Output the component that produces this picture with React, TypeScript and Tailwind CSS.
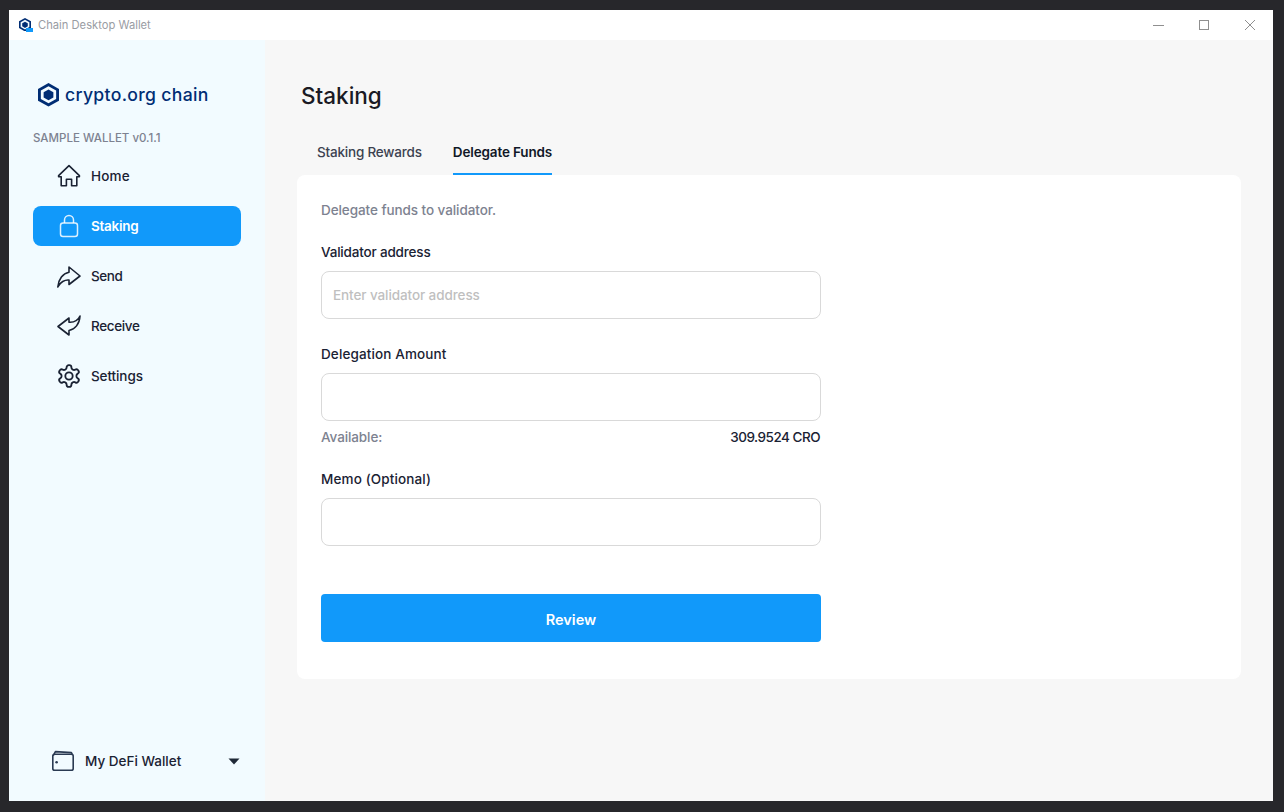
const font = 'font-["Inter",sans-serif]';

function HomeIcon() {
  return (
    <svg width="24" height="24" viewBox="0 0 24 24" fill="none" stroke="#1a2233" strokeWidth="1.6" strokeLinejoin="round" strokeLinecap="round">
      <path d="M12 1.6 1.6 11.6v1.2h2.6v9h5.2v-6.6h5.2v6.6h5.2v-9h2.6v-1.2z" />
    </svg>
  );
}

function LockIcon() {
  return (
    <svg width="24" height="24" viewBox="0 0 24 24" fill="none" stroke="#ffffff" strokeOpacity="0.85" strokeWidth="1.5">
      <rect x="3.5" y="9" width="17" height="13.5" rx="2.5" />
      <path d="M7.5 9V6a4.5 4.5 0 0 1 9 0v3" />
    </svg>
  );
}

function SendIcon() {
  return (
    <svg width="24" height="24" viewBox="0 0 24 24" fill="none" stroke="#1a2233" strokeWidth="1.6" strokeLinejoin="round" strokeLinecap="round">
      <path d="M12 3 23 12 12 20.5V16C8 15.5 3 18 .8 23 1.5 15 6 9.5 12 8.2z" />
    </svg>
  );
}

function ReceiveIcon() {
  return (
    <svg width="24" height="24" viewBox="0 0 24 24" fill="none" stroke="#1a2233" strokeWidth="1.6" strokeLinejoin="round" strokeLinecap="round">
      <path d="M12 21 1 12.5 12 4V8.2C16.5 8.5 21 6.5 23 2 22.5 10 18 15.5 12 16.5z" />
    </svg>
  );
}

function GearIcon() {
  return (
    <svg className="-ml-[1px] -mt-[1px]" width="26" height="26" viewBox="0 0 24 24" fill="none" stroke="#1a2233" strokeWidth="1.7" strokeLinejoin="round" strokeLinecap="round">
      <path d="M12.22 2h-.44a2 2 0 0 0-2 2v.18a2 2 0 0 1-1 1.73l-.43.25a2 2 0 0 1-2 0l-.15-.08a2 2 0 0 0-2.73.73l-.22.38a2 2 0 0 0 .73 2.73l.15.1a2 2 0 0 1 1 1.72v.51a2 2 0 0 1-1 1.74l-.15.09a2 2 0 0 0-.73 2.73l.22.38a2 2 0 0 0 2.73.73l.15-.08a2 2 0 0 1 2 0l.43.25a2 2 0 0 1 1 1.73V20a2 2 0 0 0 2 2h.44a2 2 0 0 0 2-2v-.18a2 2 0 0 1 1-1.73l.43-.25a2 2 0 0 1 2 0l.15.08a2 2 0 0 0 2.73-.73l.22-.39a2 2 0 0 0-.73-2.73l-.15-.08a2 2 0 0 1-1-1.74v-.5a2 2 0 0 1 1-1.74l.15-.09a2 2 0 0 0 .73-2.73l-.22-.38a2 2 0 0 0-2.73-.73l-.15.08a2 2 0 0 1-2 0l-.43-.25a2 2 0 0 1-1-1.73V4a2 2 0 0 0-2-2z" />
      <circle cx="12" cy="12" r="3.4" />
    </svg>
  );
}

function WalletIcon() {
  return (
    <svg width="22" height="22" viewBox="0 0 22 22" fill="none" stroke="#2a3a52" strokeWidth="1.6" strokeLinejoin="round">
      <rect x="0.8" y="4.2" width="20.4" height="16" rx="1.8" />
      <path d="M1.2 5.6 3.4 1.6 19.4 2.6 20.6 5" />
      <circle cx="4.6" cy="12.2" r="1.3" fill="#2a3a52" stroke="none" />
    </svg>
  );
}

function Logo({ size }: { size: number }) {
  return (
    <svg width={size} height={size * 1.12} viewBox="0 0 25 28">
      <path d="M12.5 0 25 7v14l-12.5 7L0 21V7z" fill="#002d74" />
      <path d="M12.5 3.8 21.6 9v10l-9.1 5.2L3.4 19V9z" fill="#f2fbff" />
      <path d="M12.5 7.6 18.3 11v6.4l-5.8 3.2-5.8-3.2V11z" fill="#002d74" />
    </svg>
  );
}

function NavItem({ icon, label, active, fit }: { icon: React.ReactNode; label: string; active?: boolean; fit?: string }) {
  return (
    <div className={`flex h-10 items-center rounded-lg pl-6 mb-2.5 ${active ? 'bg-[#1199fa] text-white font-semibold' : 'text-[#1a2233] font-medium'}`}>
      <span className="w-[34px] shrink-0">{icon}</span>
      <span className={`text-[13.5px] ${fit ?? ''}`}>{label}</span>
    </div>
  );
}

function Field({ label, placeholder, fit }: { label: string; placeholder?: string; fit?: string }) {
  return (
    <div>
      <div className={`h-5 text-[13.5px] leading-5 font-medium text-[#1a2233] ${fit ?? ''}`}>{label}</div>
      <div className="mt-[9px] flex h-12 items-center rounded-lg border border-[#d9d9d9] bg-white px-[11px] text-[13.5px] font-medium tracking-[-0.09px] text-[#bfbfbf]">{placeholder}</div>
    </div>
  );
}

export default function App() {
  return (
    <div className={`h-[812px] w-[1284px] overflow-hidden bg-[#27272b] pb-[11px] pl-[9px] pr-[11px] pt-[10px] ${font}`}>
      <div className="flex h-full flex-col">
        <div className="flex h-[30px] shrink-0 items-center bg-white pl-[10px]">
          <div className="relative mr-[5px] h-[14px] w-[14px]">
            <Logo size={12} />
            <span className="absolute bottom-0 right-0 h-[4px] w-[7px] bg-[#1199fa]" />
          </div>
          <span className="text-[11.2px] text-[#999ca3]">Chain Desktop Wallet</span>
          <div className="ml-auto flex items-center gap-[35px] pr-[17px]">
            <span className="block h-px w-[11px] bg-[#8f8f8f]" />
            <span className="block h-[10px] w-[10px] border border-[#8f8f8f]" />
            <svg width="12" height="12" viewBox="0 0 12 12" stroke="#8f8f8f" strokeWidth="1">
              <path d="M1 1l10 10M11 1 1 11" />
            </svg>
          </div>
        </div>

        <div className="flex min-h-0 flex-1">
          <aside className="flex w-[256px] shrink-0 flex-col bg-[#f2fbff] pb-[20px] pl-[24px] pr-[24px]">
            <div className="mt-[43px] flex items-center pl-[5px]">
              <Logo size={21} />
              <span className="ml-[6px] text-[17.6px] font-medium leading-6 tracking-[0.33px] text-[#002d74]">crypto.org chain</span>
            </div>
            <div className="mt-[21px] text-[11.5px] font-medium leading-5 text-[#7d8290]">SAMPLE WALLET v0.1.1</div>
            <nav className="mt-[8px]">
              <NavItem icon={<HomeIcon />} label="Home" fit="tracking-[0.2px]" />
              <NavItem icon={<LockIcon />} label="Staking" active fit="tracking-[-0.25px]" />
              <NavItem icon={<SendIcon />} label="Send" fit="tracking-[-0.4px]" />
              <NavItem icon={<ReceiveIcon />} label="Receive" fit="tracking-[-0.35px]" />
              <NavItem icon={<GearIcon />} label="Settings" fit="tracking-[-0.1px]" />
            </nav>
            <div className="mt-auto flex h-10 items-center pl-[19px] text-[13.5px] font-medium text-[#1a2233]">
              <WalletIcon />
              <span className="ml-[11px]">My DeFi Wallet</span>
              <svg className="ml-auto mr-[1px]" width="12" height="7" viewBox="0 0 12 7" fill="#1f2937">
                <path d="M0.5 0.5h11L6 6.5z" />
              </svg>
            </div>
          </aside>

          <main className="min-w-0 flex-1 bg-[#f7f7f7] pl-[32px] pr-[32px]">
            <h1 className="mt-[40px] pl-[4px] text-[22.5px] font-medium leading-[32px] text-[#1a1a24]">Staking</h1>
            <div className="mt-[24px] flex h-[39px] gap-[31px] pl-[20px] text-[13.5px] font-medium">
              <div className="pt-[6px] leading-5 tracking-[-0.2px] text-[#3c4250]">Staking Rewards</div>
              <div className="border-b-2 border-[#1199fa] pt-[6px] leading-5 font-semibold tracking-[-0.14px] text-[#111827]">Delegate Funds</div>
            </div>
            <section className="rounded-lg bg-white px-6 pb-[37px] pt-[25px]">
              <p className="text-[13.5px] font-medium leading-5 tracking-[-0.07px] text-[#7d8290]">Delegate funds to validator.</p>
              <div className="mt-[22px] w-[500px]">
                <Field label="Validator address" placeholder="Enter validator address" fit="tracking-[-0.18px]" />
                <div className="mt-[25px]">
                  <Field label="Delegation Amount" fit="tracking-[0.12px]" />
                </div>
                <div className="mt-[6px] flex h-5 items-center justify-between pr-[1px] text-[13.5px] leading-5">
                  <span className="font-medium tracking-[-0.1px] text-[#7d8290]">Available:</span>
                  <span className="font-medium tracking-[-0.5px] text-[#1a2233]">309.9524 CRO</span>
                </div>
                <div className="mt-[22px]">
                  <Field label="Memo (Optional)" fit="tracking-[0.13px]" />
                </div>
                <button className="mt-[48px] flex h-12 w-full items-center justify-center rounded bg-[#1199fa] pt-[4px] text-[14.5px] font-semibold text-white">Review</button>
              </div>
            </section>
          </main>
        </div>
      </div>
    </div>
  );
}
